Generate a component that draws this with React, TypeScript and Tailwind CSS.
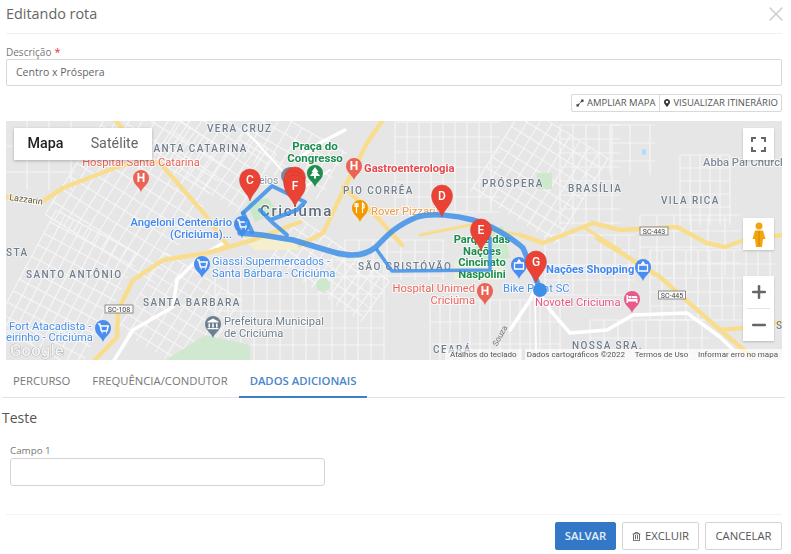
import React from "react";
import { FaExpandAlt, FaMapMarkerAlt, FaRegTrashAlt } from "react-icons/fa";
import { X, Plus, Minus } from "lucide-react";

type Patch = [number, number, number, number, number, number, number];
// x, y, w, h, rotation, spacing across x, spacing across y
const patches: Patch[] = [
  [75, 110, 130, 150, 32, 11, 15],
  [20, 225, 95, 130, 28, 10, 13],
  [5, 120, 70, 70, 0, 22, 26],
  [165, 120, 100, 70, 34, 10, 13],
  [135, 270, 90, 90, 32, 11, 12],
  [215, 260, 170, 100, 0, 13, 17],
  [275, 245, 110, 50, 35, 10, 11],
  [395, 122, 105, 90, 0, 12, 15],
  [345, 240, 100, 40, 0, 14, 12],
  [430, 300, 130, 60, 0, 10, 22],
  [490, 125, 100, 100, 32, 11, 12],
  [560, 125, 60, 100, 0, 13, 14],
  [610, 125, 45, 50, 0, 20, 18],
  [680, 155, 50, 70, 0, 10, 13],
  [640, 215, 100, 60, 0, 17, 16],
  [650, 250, 125, 70, 0, 12, 14],
  [545, 235, 90, 60, 0, 14, 15],
  [590, 320, 120, 40, 0, 14, 18],
  [240, 125, 100, 55, 30, 12, 14],
];

function Streets() {
  return (
    <g stroke="#f8f8f8" strokeWidth="1.1" opacity="0.9">
      {patches.map(([x, y, w, h, r, dx, dy], i) => {
        const lines: React.ReactNode[] = [];
        for (let a = x; a <= x + w; a += dx)
          lines.push(<line key={"v" + a} x1={a} y1={y} x2={a} y2={y + h} />);
        for (let b = y; b <= y + h; b += dy)
          lines.push(<line key={"h" + b} x1={x} y1={b} x2={x + w} y2={b} />);
        return (
          <g key={i} transform={`rotate(${r} ${x + w / 2} ${y + h / 2})`}>
            {lines}
          </g>
        );
      })}
    </g>
  );
}

function Pin({ x, y, letter }: { x: number; y: number; letter?: string }) {
  return (
    <g transform={`translate(${x} ${y})`}>
      <path d="M0 0C-2-8-10.500-12-10.500-21.500A10.500 10.500 0 1 1 10.500-21.500C10.500-12 2-8 0 0Z" fill="#ea4335" stroke="#d0362b" strokeWidth="0.5" />
      {letter && (
        <text x="0" y="-17.500" textAnchor="middle" fontSize="12" fontWeight="500" fill="#fff" fontFamily="Roboto, sans-serif">
          {letter}
        </text>
      )}
    </g>
  );
}

function Poi({ x, y, color, glyph }: { x: number; y: number; color: string; glyph?: string }) {
  return (
    <g transform={`translate(${x} ${y})`}>
      <path d="M0 0C-1.500-5-8-7.500-8-14A8 8 0 1 1 8-14C8-7.500 1.500-5 0 0Z" fill={color} />
      {glyph === "H" && (
        <text x="0" y="-9.800" textAnchor="middle" fontSize="12" fontWeight="700" fill="#fff" fontFamily="Roboto, sans-serif">H</text>
      )}
      {glyph === "cart" && (
        <path d="M-5-18H-3.200L-1.500-11H4L5.200-16H-2.700M-1.200-9.200H-0.400M3-9.200H3.800" fill="none" stroke="#fff" strokeWidth="1.500" />
      )}
      {glyph === "bag" && (
        <path d="M-4.500-16H4.500V-10H-4.500ZM-2-16L0-19L2-16" fill="none" stroke="#fff" strokeWidth="1.300" />
      )}
      {glyph === "tree" && <path d="M0-20L3.500-15H2L5-11H1V-8.500H-1V-11H-5L-2-15H-3.500Z" fill="#fff" />}
      {glyph === "fork" && (
        <path d="M-3.500-19V-9M-5-19V-15.500H-2V-19M2.500-9V-19C4-18 4.500-16 4-14H2.500" fill="none" stroke="#fff" strokeWidth="1.200" />
      )}
      {glyph === "bank" && <path d="M0-19.500L5.500-16.500V-15.500H-5.500V-16.500ZM-4.500-14.500H-3V-10.500H-4.500ZM-0.800-14.500H0.800V-10.500H-0.800ZM3-14.500H4.500V-10.500H3ZM-5.500-10H5.500V-8.800H-5.500Z" fill="#fff" />}
      {glyph === "bed" && <path d="M-5.500-10V-18H-4V-14H5.500V-10H4V-11.500H-4V-10ZM-3.500-17H-1V-14.800H-3.500ZM-0.500-17H4C5-17 5.500-16 5.500-15V-14.800H-0.500Z" fill="#fff" />}
    </g>
  );
}

type L = [string, number, number];
const hood: L[] = [
  ["VERA CRUZ", 207, 132],
  ["SANTA CATARINA", 146, 152],
  ["PIO CORRÊA", 343, 194],
  ["PRÓSPERA", 482, 187],
  ["BRASÍLIA", 568, 192],
  ["VILA RICA", 661, 204],
  ["SANTO ANTÔNIO", 26, 278],
  ["SANTA BARBARA", 143, 306],
  ["SÃO CRISTÓVÃO", 358, 270],
  ["NOSSA SRA.", 572, 349],
  ["CEARÁ", 433, 353],
  ["STA", 6, 256],
  ["S", 776, 329],
];

function Label({ x, y, lines, color, size = 11.200, weight = 400, anchor = "start" }: { x: number; y: number; lines: string[]; color: string; size?: number; weight?: number; anchor?: "start" | "middle" | "end" }) {
  return (
    <text fontSize={size} fontWeight={weight} fill={color} textAnchor={anchor} stroke="#fff" strokeWidth="2" strokeOpacity="0.75" paintOrder="stroke" strokeLinejoin="round">
      {lines.map((t, i) => (
        <tspan key={i} x={x} y={y + i * 11.500}>{t}</tspan>
      ))}
    </text>
  );
}

function MapDrawing() {
  return (
    <svg viewBox="6 121 776 239" width="776" height="239" className="block" style={{ fontFamily: "Roboto, sans-serif" }}>
      <rect x="6" y="121" width="776" height="239" fill="#e6e6e6" />
      <Streets />
      {/* green areas */}
      <path d="M166 360L205 335L250 345L250 360Z" fill="#cfe8cf" />
      <path d="M247 203L268 198L278 212L255 222Z" fill="#c9e7c9" />
      <rect x="537" y="173" width="15" height="16" fill="#cde8cd" />
      <path d="M470 232L503 226L510 258L480 262Z" fill="#cde8cd" />
      <circle cx="323" cy="285" r="7" fill="#cde8cd" />
      <rect x="642" y="149" width="4" height="6" rx="2" fill="#aadaff" />
      <path d="M242 238L290 236L300 250L255 250Z" fill="#f6efcf" />
      <path d="M454 262L503 262L503 280L454 280Z" fill="#f0efd2" opacity="0.7" />
      {/* white main roads */}
      <g fill="none" stroke="#fff" strokeWidth="3.500" strokeLinecap="round" strokeLinejoin="round">
        <path d="M113 362L133 330L173 307L177 280L200 257L223 243" />
        <path d="M746 362L720 337L687 313L633 315L607 330L570 333L550 310L535 285" />
        <path d="M510 330L530 300L537 285" />
        <path d="M297 160L320 143L345 130" />
        <path d="M535 290L536 350" strokeWidth="1.800" />
        <path d="M245 130L300 190L330 170" strokeWidth="2" />
      </g>
      {/* yellow roads */}
      <g fill="none" stroke="#f9dd8f" strokeWidth="4.500" strokeLinecap="round" strokeLinejoin="round">
        <path d="M2 196L40 203L63 188L117 167L143 160L160 163L207 217L227 245" />
        <path d="M113 118L122 128" />
        <path d="M93 362L117 337L118 310L133 280L163 260L207 253L253 240L300 222" />
        <path d="M383 120L367 143L347 183L323 233L300 245" />
        <path d="M343 187L377 217L402 245" />
        <path d="M520 235L543 243L593 223L620 230L677 227L707 243L725 247L750 238L785 235" />
        <path d="M585 228L620 250" strokeWidth="3" />
        <path d="M597 238L660 277L720 330L750 355" />
        <path d="M720 330L745 328L782 322" />
        <path d="M420 235L470 225L520 235" strokeWidth="3" />
      </g>
      {/* street labels */}
      <text x="9" y="200" fontSize="9" fill="#555" transform="rotate(8 9 200)" stroke="#fff" strokeWidth="2" strokeOpacity="0.7" paintOrder="stroke">Lazzarin</text>
      <text x="484" y="345" fontSize="8" fill="#777" transform="rotate(-62 492 335)">Souza</text>
      {/* road shields */}
      {[["SC-108", 119, 309, 28], ["SC-443", 654, 231, 28], ["SC-445", 672, 295, 27]].map(([t, x, y, w]) => (
        <g key={t as string}>
          <rect x={(x as number) - (w as number) / 2} y={(y as number) - 4} width={w as number} height="8" fill="#f8f8f8" stroke="#777" strokeWidth="0.800" />
          <text x={x as number} y={(y as number) + 2.500} textAnchor="middle" fontSize="7" fill="#444">{t}</text>
        </g>
      ))}
      {/* neighbourhoods */}
      {hood.map(([t, x, y]) => (
        <text key={t} x={x} y={y} fontSize="10" fontWeight="500" letterSpacing="1.400" fill="#6f7d8c" stroke="#fff" strokeWidth="1.500" strokeOpacity="0.6" paintOrder="stroke">{t}</text>
      ))}
      <text x="260" y="216" fontSize="15" fontWeight="500" letterSpacing="1.600" fill="#5f6b78" stroke="#fff" strokeWidth="2" strokeOpacity="0.7" paintOrder="stroke">Criciúma</text>
      {/* POI labels */}
      <Label x={141} y={166} lines={["Hospital Santa Catarina"]} color="#e8665d" anchor="middle" />
      <Label x={232} y={226} lines={["Angeloni Centenário", "(Criciúma)..."]} color="#3f86f0" weight={500} anchor="end" />
      <Label x={212} y={265} lines={["Giassi Supermercados -", "Santa Bárbara - Criciúma"]} color="#4a90e8" />
      <Label x={9} y={330} lines={["Fort Atacadista -"]} color="#4a90e8" />
      <Label x={6} y={341} lines={["eirinho - Criciúma"]} color="#4a90e8" />
      <Label x={224} y={325} lines={["Prefeitura Municipal", "de Criciúma"]} color="#6f7f8d" />
      <Label x={315} y={150} lines={["Praça do", "Congresso"]} color="#1a8c4e" weight={700} anchor="middle" size={11.500} />
      <Label x={259} y={184} lines={["eios"]} color="#8a97a3" size={10.500} />
      <Label x={364} y={172} lines={["Gastroenterologia"]} color="#e5484d" weight={700} />
      <Label x={371} y={215} lines={["Rover Pizzaria"]} color="#ee9a3f" />
      <Label x={482} y={243} lines={["Parque das", "Nações", "Cincinato", "Naspolini"]} color="#1a8c4e" weight={700} anchor="middle" />
      <Label x={475} y={292} lines={["Hospital Unimed", "Criciúma"]} color="#e8665d" anchor="end" />
      <Label x={503} y={292} lines={["Bike Point SC"]} color="#4a90e8" />
      <Label x={546} y={273} lines={["Nações Shopping"]} color="#3f86f0" weight={700} />
      <Label x={535} y={306} lines={["Novotel Criciuma"]} color="#e8557f" />
      <Label x={703} y={166} lines={["Abba Pai Church"]} color="#7d8a97" weight={500} />
      {/* POI pins */}
      <Poi x={141} y={192} color="#ea6355" glyph="H" />
      <Poi x={354} y={180} color="#ea6355" glyph="H" />
      <Poi x={485} y={305} color="#ea6355" glyph="H" />
      <Poi x={360} y={222} color="#f29900" glyph="fork" />
      <Poi x={315} y={187} color="#1e8e4e" glyph="tree" />
      <Poi x={202} y={278} color="#4a8df0" glyph="cart" />
      <Poi x={103} y={342} color="#4a8df0" glyph="cart" />
      <Poi x={242} y={238} color="#4a8df0" glyph="cart" />
      <Poi x={213} y={338} color="#6b7f8f" glyph="bank" />
      <Poi x={519} y={279} color="#4a8df0" glyph="bag" />
      <Poi x={643} y={281} color="#4a8df0" glyph="bag" />
      <Poi x={632} y={313} color="#e85a88" glyph="bed" />
      <circle cx="290" cy="176" r="9" fill="#7b8a97" />
      {/* route */}
      <g fill="none" stroke="#3d8fe8" strokeOpacity="0.85" strokeLinejoin="round" strokeLinecap="round">
        <path d="M243 213L272 186L305 202L297 210L270 220L260 210L273 223L287 235" strokeWidth="4" />
        <path d="M243 213L252 232" strokeWidth="4.500" />
        <path d="M240 233L262 235L293 240L333 252C350 257 365 256 376 247C385 238 393 227 417 217C432 213 455 215 473 220C490 225 510 236 523 248L540 289" strokeWidth="5.500" />
        <path d="M377 250L392 271L490 270L490 238" strokeWidth="3.500" />
      </g>
      <circle cx="540" cy="290" r="7" fill="#3d8fe8" />
      {/* route pins */}
      <Pin x={295} y={199} />
      <Pin x={294} y={203} />
      <Pin x={250} y={201} letter="C" />
      <Pin x={295} y={207} letter="F" />
      <Pin x={442} y={217} letter="D" />
      <Pin x={481} y={251} letter="E" />
      <Pin x={536} y={283} letter="G" />
      {/* Google wordmark */}
      <text x="10" y="356" fontSize="17" fontWeight="500" fill="#f4f4f4" stroke="#9a9a9a" strokeWidth="0.700" paintOrder="stroke" opacity="0.9">Google</text>
    </svg>
  );
}

const btn = "h-[28px] flex items-center justify-center gap-1 rounded-[2px] border border-[#d4d4d4] bg-white text-[#555] text-[11.3px]";

export default function App() {
  return (
    <div className="w-[791px] h-[554px] bg-white flex flex-col overflow-hidden text-[#666] pl-[6px] pr-[9px]" style={{ fontFamily: '"Open Sans", sans-serif' }}>
      <header className="h-[34px] flex items-center justify-between border-b border-[#f1f1f1] shrink-0">
        <h1 className="text-[14.4px] leading-none text-[#666] font-normal pb-[5px]">Editando rota</h1>
        <X size={24} strokeWidth={1.4} className="text-[#c8c8c8] mr-[-6px] mb-[5px]" />
      </header>

      <div className="mt-[11px] h-[14px] flex items-start text-[10px] leading-[14px] text-[#777]">
        Descrição<span className="text-[#e33] ml-[3px] text-[11px]">*</span>
      </div>
      <div className="h-[27px] border border-[#d9d9d9] rounded-[2px] flex items-center px-[9px] text-[10.5px] text-[#666] shrink-0">Centro x Próspera</div>

      <div className="mt-[8px] h-[18px] flex justify-end shrink-0">
        <div className="flex border border-[#d9d9d9] rounded-[2px] text-[9.5px] leading-none text-[#555]">
          <span className="flex items-center gap-[3px] px-[4px] border-r border-[#d9d9d9]"><FaExpandAlt size={8} className="text-[#333]" />AMPLIAR MAPA</span>
          <span className="flex items-center gap-[2px] px-[3px]"><FaMapMarkerAlt size={8} className="text-[#333]" />VISUALIZAR ITINERÁRIO</span>
        </div>
      </div>

      <div className="relative mt-[9px] w-[776px] h-[239px] shrink-0 overflow-hidden">
        <MapDrawing />
        <div className="absolute left-[8px] top-[7px] h-[32px] w-[138px] flex bg-white shadow-[0_1px_3px_rgba(0,0,0,0.25)] text-[14.3px]" style={{ fontFamily: "Roboto, sans-serif" }}>
          <span className="w-[63px] flex items-center justify-center text-[#222] font-medium">Mapa</span>
          <span className="flex-1 flex items-center justify-center text-[#666]">Satélite</span>
        </div>
        <div className="absolute left-[737px] top-[7px] w-[31px] h-[32px] bg-white flex items-center justify-center shadow-[0_1px_2px_rgba(0,0,0,0.2)]">
          <svg width="15" height="15" viewBox="0 0 15 15" fill="none" stroke="#666" strokeWidth="2"><path d="M1 5V1H5M10 1H14V5M14 10V14H10M5 14H1V10" /></svg>
        </div>
        <div className="absolute left-[737px] top-[97px] w-[31px] h-[32px] bg-white flex items-center justify-center shadow-[0_1px_2px_rgba(0,0,0,0.2)]">
          <svg width="14" height="25" viewBox="0 0 14 25" fill="#f2a50c"><circle cx="7" cy="4" r="3.500" /><path d="M3 8.500H11L13.500 17H11L10 25H4L3 17H0.500Z" /><path d="M7 9V24" stroke="#c87f00" strokeWidth="0.800" /></svg>
        </div>
        <div className="absolute left-[737px] top-[155px] w-[31px] h-[65px] bg-white flex flex-col items-center shadow-[0_1px_2px_rgba(0,0,0,0.2)]">
          <div className="h-[32px] w-full flex items-center justify-center"><Plus size={20} strokeWidth={3} className="text-[#666]" /></div>
          <div className="h-px w-[23px] bg-[#e3e3e3]" />
          <div className="h-[32px] w-full flex items-center justify-center"><Minus size={20} strokeWidth={3} className="text-[#666]" /></div>
        </div>
        <div className="absolute right-0 bottom-0 h-[11px] w-[337px] flex items-center text-[8px] text-[#555]" style={{ fontFamily: "Roboto, sans-serif" }}>
          <span className="bg-white/60 px-[5px]">Atalhos do teclado</span>
          <span className="ml-[3px] bg-white/70 flex-1 flex justify-between pr-[4px]">
            <span className="pl-[2px]">Dados cartográficos ©2022</span>
            <span>Termos de Uso</span>
            <span>Informar erro no mapa</span>
          </span>
        </div>
      </div>

      <nav className="ml-[-4px] mr-[-3px] h-[38px] pt-[6px] shrink-0 flex border-b border-[#dfe3e8] text-[11.3px] text-[#777]">
        <span className="px-[11px] flex items-center">PERCURSO</span>
        <span className="px-[11px] flex items-center">FREQUÊNCIA/CONDUTOR</span>
        <span className="px-[11px] flex items-center font-semibold text-[#4a86c8] border-b-2 border-[#3f7fc4] mb-[-1px]">DADOS ADICIONAIS</span>
      </nav>

      <h2 className="ml-[-4px] mt-[10px] text-[14px] leading-[20px] font-normal text-[#555]">Teste</h2>
      <label className="mt-[16px] ml-[4px] text-[9.8px] leading-[14px] text-[#777]">Campo 1</label>
      <div className="ml-[4px] w-[315px] h-[28px] border border-[#d4d4d4] rounded-[3px] shrink-0" />

      <footer className="mt-[28px] border-t border-[#f3f3f3] pt-[7px] flex justify-end gap-[6px]">
        <button className={btn + " w-[61px] !bg-[#3378c7] !border-[#3378c7] !text-[#e6eef8] font-semibold"}>SALVAR</button>
        <button className={btn + " w-[77px]"}><FaRegTrashAlt size={9} />EXCLUIR</button>
        <button className={btn + " w-[77px]"}>CANCELAR</button>
      </footer>
    </div>
  );
}
